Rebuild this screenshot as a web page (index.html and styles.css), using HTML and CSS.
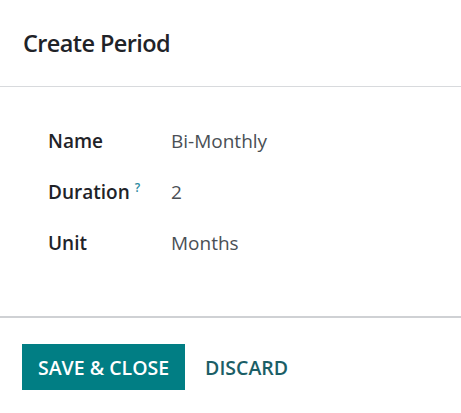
FILE: index.html
```html
<!DOCTYPE html>
<html lang="en">
<head>
    <meta charset="UTF-8">
    <meta name="viewport" content="width=device-width, initial-scale=1.0">
    <title>Create Period</title>
    <link rel="stylesheet" href="styles.css">
</head>
<body>

    <div class="dialog">

        <!-- Header -->
        <div class="header">
            <h4>Create Period</h4>
        </div>

        <!-- Form -->
        <div class="body">
            <div class="row">
                <span class="label">Name</span>
                <span class="value">Bi-Monthly</span>
            </div>
            <div class="row">
                <span class="label">Duration<sup class="help">?</sup></span>
                <span class="value">2</span>
            </div>
            <div class="row">
                <span class="label">Unit</span>
                <span class="value">Months</span>
            </div>
        </div>

        <!-- Footer -->
        <div class="footer">
            <button class="primary">Save &amp; Close</button>
            <button class="secondary">Discard</button>
        </div>

    </div>

</body>
</html>
```

FILE: styles.css
```css
body { margin: 0; font-family: "Open Sans", "Noto Sans", sans-serif; background: #fff; color: #212529; }
.dialog { width: 461px; }
.header { height: 86px; border-bottom: 1px solid #d8dadd; padding: 0 23px; display: flex; align-items: center; }
.header h4 { margin: 0; font-size: 23.5px; font-weight: 600; color: #1f2328; letter-spacing: -0.6px; }
.body { padding: 36px 48px 55px; display: flex; flex-direction: column; gap: 15px; }
.row { display: flex; align-items: center; height: 36px; font-size: 19px; }
.label { width: 123px; font-weight: 600; color: #1f2328; }
.help { font-size: 12px; color: #2a8aa0; margin-left: 5px; font-weight: 600; }
.value { color: #4a4f55; }
.footer { border-top: 2px solid #cfd1d4; padding: 26px 22px; display: flex; gap: 4px; }
button { font-family: inherit; font-size: 19.5px; font-weight: 600; text-transform: uppercase; border: none; cursor: pointer; height: 46px; padding: 0 16px; }
.primary { background: #017e84; color: #fff; }
.secondary { background: none; color: #1b5e66; }
```
